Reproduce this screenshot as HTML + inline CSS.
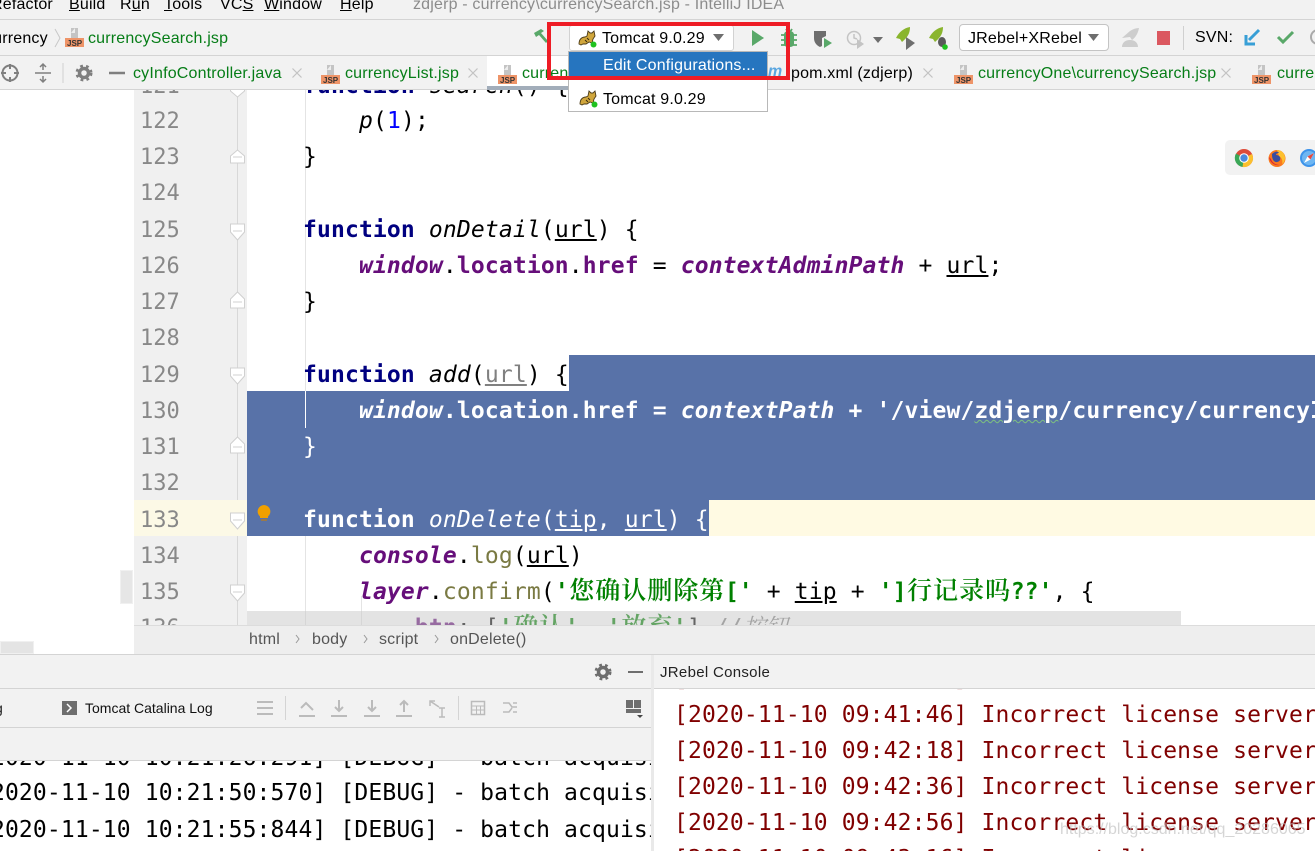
<!DOCTYPE html>
<html><head><meta charset="utf-8"><style>
html,body{margin:0;padding:0}
body{width:1315px;height:851px;overflow:hidden;position:relative;background:#fff;font-family:"Liberation Sans","Noto Sans CJK SC",sans-serif}
.a{position:absolute}
.t{position:absolute;white-space:pre;font-size:16px;letter-spacing:.18px;line-height:20px;color:#000}
.c{position:absolute;white-space:pre;font-family:"DejaVu Sans Mono","Noto Serif CJK SC",monospace;font-size:23px;letter-spacing:.14px;line-height:36px;color:#000;left:303px}
.n{position:absolute;left:140px;width:40px;font-family:"DejaVu Sans Mono",monospace;font-size:22px;line-height:36px;color:#888;white-space:pre}
.k{color:#000080;font-weight:bold}.w{color:#660e7a;font-weight:bold;font-style:italic}.i{font-style:italic}
.u{text-decoration:underline}.g{color:#008000;font-weight:bold}.sel,.sel *{color:#fff}
.cj{display:inline-block;width:26px;text-align:center;letter-spacing:0;font-family:"Noto Serif CJK SC",serif;font-size:25px;font-weight:600;color:#008000;line-height:30px}
.jsp{position:absolute;width:18px;height:20px}
.log{position:absolute;white-space:pre;font-family:"DejaVu Sans Mono",monospace;font-size:23px;letter-spacing:.13px;line-height:36px}
.r{color:#800000}
svg{position:absolute;overflow:visible}
</style></head><body>

<!-- editor -->
<div class="a" style="left:0;top:90px;width:134px;height:564px;background:#fff"></div>
<div class="a" style="left:120px;top:570px;width:13px;height:34px;background:#e6e6e6;border:1px solid #f0f0f0;box-sizing:border-box"></div>
<div class="a" style="left:134px;top:90px;width:113px;height:535px;background:#f0f0f0"></div>
<div class="a" style="left:237px;top:90px;width:1px;height:535px;background:#d8d8d8"></div>
<div class="a" style="left:134px;top:500px;width:113px;height:36px;background:#fcf9e6"></div>
<div class="a" style="left:247px;top:500px;width:1068px;height:36px;background:#fffae3"></div>
<div class="a" style="left:569px;top:355px;width:746px;height:36px;background:#5872a8"></div>
<div class="a" style="left:247px;top:391px;width:1068px;height:109px;background:#5872a8"></div>
<div class="a" style="left:247px;top:500px;width:462px;height:36px;background:#5872a8"></div>
<div class="a" style="left:305px;top:90px;width:1px;height:535px;background:#e4e4e4"></div>
<div class="a" style="left:305px;top:391px;width:1px;height:37px;background:#fff"></div>
<div class="a" style="left:305px;top:428px;width:1px;height:108px;background:#5872a8"></div>
<div class="a" style="left:361px;top:596px;width:1px;height:29px;background:#e4e4e4"></div>

<div class="n" style="top:69px">121</div><div class="n" style="top:104px">122</div><div class="n" style="top:140px">123</div><div class="n" style="top:176px">124</div><div class="n" style="top:213px">125</div><div class="n" style="top:249px">126</div><div class="n" style="top:285px">127</div><div class="n" style="top:321px">128</div><div class="n" style="top:358px">129</div><div class="n" style="top:394px">130</div><div class="n" style="top:430px">131</div><div class="n" style="top:466px">132</div><div class="n" style="top:503px">133</div><div class="n" style="top:539px">134</div><div class="n" style="top:575px">135</div><div class="n" style="top:611px">136</div>

<!-- fold marks -->
<svg style="left:0;top:0" width="1" height="1" fill="#fff" stroke="#d0d0d0" stroke-width="1">
<path d="M230.500 85h14v6l-7 6-7-6z"/>
<path d="M230.500 163v-7l7-6 7 6v7zM233 157h9"/>
<path d="M230.500 224h14v8l-7 8-7-8zM233 231h9"/>
<path d="M230.500 308v-9l7-7 7 7v9zM233 302h9"/>
<path d="M230.500 368h14v8l-7 8-7-8zM233 375h9"/>
<path d="M230.500 453v-9l7-7 7 7v9zM233 447h9"/>
<path d="M230.500 513h14v8l-7 8-7-8zM233 520h9"/>
<path d="M230.500 585h14v8l-7 8-7-8zM233 592h9"/>
</svg>
<svg style="left:0;top:0" width="1" height="1">
<path d="M264 505a6.500 6.500 0 0 1 4 11.500v1.500h-8v-1.500a6.500 6.500 0 0 1 4-11.500z" fill="#f0a000"/><rect x="261" y="519" width="6" height="2" fill="#99794a"/>
</svg>

<div class="c" style="top:68px"><span class="k">function</span> <span class="i">search</span>() {</div>
<div class="c" style="top:103px">    <span class="i">p</span>(<span style="color:#00f">1</span>);</div>
<div class="c" style="top:139px">}</div>
<div class="c" style="top:212px"><span class="k">function</span> <span class="i">onDetail</span>(<span class="u">url</span>) {</div>
<div class="c" style="top:248px">    <span class="w">window</span>.<b style="color:#660e7a">location</b>.<b style="color:#660e7a">href</b> = <span class="w">contextAdminPath</span> + <span class="u">url</span>;</div>
<div class="c" style="top:284px">}</div>
<div class="c" style="top:357px"><span class="k">function</span> <span class="i">add</span>(<span class="u" style="color:#808080">url</span>) {</div>
<div class="c sel" style="top:393px;font-weight:bold">    <span class="i">window</span>.location.href = <span class="i">contextPath</span> + '/view/<span style="text-decoration:underline wavy #7ec27e;text-decoration-thickness:1px">zdjerp</span>/currency/currencyInfo</div>
<div class="c sel" style="top:429px">}</div>
<div class="c sel" style="top:502px"><b>function</b> <span class="i">onDelete</span>(<span class="u">tip</span>, <span class="u">url</span>) {</div>
<div class="c" style="top:538px">    <span class="w">console</span>.<span style="color:#7a7a43">log</span>(<span class="u">url</span>)</div>
<div class="c" style="top:574px">    <span class="w">layer</span>.<span style="color:#7a7a43">confirm</span>(<span class="g">'<span class="cj">您</span><span class="cj">确</span><span class="cj">认</span><span class="cj">删</span><span class="cj">除</span><span class="cj">第</span>['</span> + <span class="u">tip</span> + <span class="g">']<span class="cj">行</span><span class="cj">记</span><span class="cj">录</span><span class="cj">吗</span>??'</span>, {</div>
<div class="c" style="top:610px">        <span class="k" style="color:#660e7a">btn</span>: [<span class="g">'<span class="cj">确</span><span class="cj">认</span>'</span>, <span class="g">'<span class="cj">放</span><span class="cj">弃</span>'</span>] <span class="i" style="color:#808080">//按钮</span></div>

<div class="a" style="left:247px;top:611px;width:934px;height:14px;background:rgba(200,200,200,.5)"></div>

<!-- chrome float -->
<div class="a" style="left:1225px;top:140px;width:95px;height:35px;background:#f2f2f2;border-radius:5px"></div>
<svg style="left:1235px;top:149px" width="18" height="18" viewBox="0 0 18 18"><circle cx="9" cy="9" r="9" fill="#dd4b39"/><path d="M9 9L1 4.500A9 9 0 0 0 8 18z" fill="#3aa757"/><path d="M9 9l8-4A9 9 0 0 1 7.500 18z" fill="#fbc02d"/><circle cx="9" cy="9" r="4.800" fill="#fff"/><circle cx="9" cy="9" r="3.700" fill="#4a89dc"/></svg>
<svg style="left:1268px;top:149px" width="18" height="18" viewBox="0 0 18 18"><circle cx="9" cy="9.500" r="8.500" fill="#f9791e"/><path d="M9 1a8 8 0 0 1 8 8c0 2-1 5-3 6 1-3 0-6-3-8z" fill="#fdc12f"/><path d="M4 5c3-3 6-3 7-1-2 0-3 1-3 2 3 0 5 2 4 5-1 2-4 3-6 1-2-2-2-5-2-7z" fill="#3a4ea0"/><path d="M1 8c1 6 6 9 11 8-4 0-8-2-9-6z" fill="#d6203c"/></svg>
<svg style="left:1300px;top:149px" width="18" height="18" viewBox="0 0 18 18"><circle cx="9" cy="9" r="9" fill="#3d93ea"/><circle cx="9" cy="9" r="7" fill="#6eb6f2"/><path d="M14 4L7.500 7.500 4 14l6.500-3.500z" fill="#fff"/><path d="M14 4L7.500 7.500l3 3z" fill="#e5483f"/></svg>

<!-- top menu -->
<div class="a" style="left:0;top:0;width:1315px;height:90px;background:#f2f2f2"></div>
<div class="t" style="left:-9px;top:-5px">Refactor</div>
<div class="t" style="left:69px;top:-5px"><u>B</u>uild</div>
<div class="t" style="left:120px;top:-5px">R<u>u</u>n</div>
<div class="t" style="left:164px;top:-5px"><u>T</u>ools</div>
<div class="t" style="left:220px;top:-5px">VC<u>S</u></div>
<div class="t" style="left:264px;top:-5px"><u>W</u>indow</div>
<div class="t" style="left:340px;top:-5px"><u>H</u>elp</div>
<div class="t" style="left:413px;top:-5px;color:#8c8c8c">zdjerp - currency\currencySearch.jsp - IntelliJ IDEA</div>
<div class="a" style="left:0;top:19px;width:1315px;height:1px;background:#d4d4d4"></div>
<div class="a" style="left:0;top:55px;width:1315px;height:1px;background:#d4d4d4"></div>
<div class="a" style="left:0;top:89px;width:1315px;height:1px;background:#d4d4d4"></div>

<!-- breadcrumb -->
<div class="t" style="left:-15px;top:29px">currency</div>
<svg style="left:54px;top:28px" width="8" height="20"><path d="M1 1l5 9-5 9" fill="none" stroke="#c8c8c8"/></svg>
<div class="jsp" style="left:65px;top:28px"><svg width="19" height="20"><path d="M6 0h7v10H6z" fill="#c4c4c4"/><path d="M6 5l4-5v5z" fill="#eee"/><rect x="0" y="10" width="19" height="9" fill="#ee9468"/><text x="2" y="18" font-size="8" font-family="Liberation Sans" fill="#333" font-weight="bold">JSP</text></svg></div>
<div class="t" style="left:88px;top:29px;color:#067d17">currencySearch.jsp</div>

<!-- tabs row left -->
<svg style="left:0;top:61px" width="130" height="24" fill="none" stroke="#7f7f7f" stroke-width="2">
<circle cx="10" cy="12" r="7.500"/><path d="M10 3v5M10 16v5M1 12h5M14 12h5"/>
<path d="M35 12h16" stroke-width="1.500"/><path d="M43 9V4m-3 2l3-3 3 3M43 15v5m-3-2l3 3 3-3" stroke-width="1.500"/>
<path d="M63 2v20" stroke="#d0d0d0" stroke-width="1"/>
<circle cx="84" cy="12" r="4.500" stroke-width="3.500"/><circle cx="84" cy="12" r="7" stroke-width="3" stroke-dasharray="2.700 3.100"/>
<path d="M109 12h16" stroke-width="2.500"/>
</svg>
<div class="t" style="left:133px;top:64px;color:#067d17">cyInfoController.java</div>
<div class="jsp" style="left:321px;top:65px"><svg width="19" height="20"><path d="M6 0h7v10H6z" fill="#c4c4c4"/><path d="M6 5l4-5v5z" fill="#eee"/><rect x="0" y="10" width="19" height="9" fill="#ee9468"/><text x="2" y="18" font-size="8" font-family="Liberation Sans" fill="#333" font-weight="bold">JSP</text></svg></div>
<div class="t" style="left:345px;top:64px;color:#067d17">currencyList.jsp</div>

<!-- active tab -->
<div class="a" style="left:487px;top:56px;width:82px;height:34px;background:#fff"></div>
<div class="a" style="left:487px;top:86px;width:82px;height:4px;background:#a2adba"></div>
<div class="jsp" style="left:498px;top:65px"><svg width="19" height="20"><path d="M6 0h7v10H6z" fill="#c4c4c4"/><path d="M6 5l4-5v5z" fill="#eee"/><rect x="0" y="10" width="19" height="9" fill="#ee9468"/><text x="2" y="18" font-size="8" font-family="Liberation Sans" fill="#333" font-weight="bold">JSP</text></svg></div>
<div class="t" style="left:522px;top:64px;color:#067d17;width:46px;overflow:hidden">currencySearch</div>

<!-- right tabs -->
<div class="t" style="left:768px;top:62px;color:#5aa6e0;font-weight:bold;font-style:italic">m</div>
<div class="t" style="left:791px;top:64px">pom.xml (zdjerp)</div>
<div class="jsp" style="left:954px;top:65px"><svg width="19" height="20"><path d="M6 0h7v10H6z" fill="#c4c4c4"/><path d="M6 5l4-5v5z" fill="#eee"/><rect x="0" y="10" width="19" height="9" fill="#ee9468"/><text x="2" y="18" font-size="8" font-family="Liberation Sans" fill="#333" font-weight="bold">JSP</text></svg></div>
<div class="t" style="left:978px;top:64px;color:#067d17">currencyOne\currencySearch.jsp</div>
<div class="jsp" style="left:1252px;top:65px"><svg width="19" height="20"><path d="M6 0h7v10H6z" fill="#c4c4c4"/><path d="M6 5l4-5v5z" fill="#eee"/><rect x="0" y="10" width="19" height="9" fill="#ee9468"/><text x="2" y="18" font-size="8" font-family="Liberation Sans" fill="#333" font-weight="bold">JSP</text></svg></div>
<div class="t" style="left:1277px;top:64px;color:#067d17">currency</div>

<!-- close crosses -->
<svg style="left:0;top:0" width="1" height="1" fill="none" stroke="#c2c2c2" stroke-width="1.200">
<path d="M292.500 68.500l9 9m0-9l-9 9M468.500 68.500l9 9m0-9l-9 9M923.500 68.500l9 9m0-9l-9 9M1221.500 68.500l9 9m0-9l-9 9"/>
<path d="M22.500 703.500l9 9m0-9l-9 9M225.500 703.500l9 9m0-9l-9 9"/>
</svg>

<!-- toolbar -->
<svg style="left:533px;top:28px" width="20" height="18"><path d="M1 5l7-4 3 2-3 2 7 8-2 2-7-8-3 2z" fill="#59a869"/></svg>
<div class="a" style="left:569px;top:25px;width:165px;height:26px;background:#fff;border:1px solid #d2d2d2;border-radius:3px;box-sizing:border-box"></div>
<svg style="left:578px;top:29px" width="20" height="20" viewBox="0 0 20 20"><path d="M1 15C1 10 4 8 7 8l2-1 1-5 2 2h2l2-2 1 5-2 3-1 4-3-1-3 2H5l-2 1z" fill="#d0a63c" stroke="#4a3a18" stroke-width=".9"/><path d="M9 9l2 2M7 11l2 2" stroke="#3a2c10" stroke-width="1"/><circle cx="15.500" cy="15.500" r="3" fill="#1fc21f"/></svg>
<div class="t" style="left:602px;top:29px">Tomcat 9.0.29</div>
<svg style="left:713px;top:34px" width="12" height="8"><path d="M0 0h11L5.500 7z" fill="#6e6e6e"/></svg>

<svg style="left:750px;top:30px" width="16" height="16"><path d="M2 0l12 8-12 8z" fill="#59a869"/></svg>
<svg style="left:780px;top:28px" width="18" height="20"><path d="M9 3c4 0 5 2 5 4v9c0 2-2 3-5 3s-5-1-5-3V7c0-2 1-4 5-4z" fill="#59a869"/><path d="M1 7h16M1 12h16M1 17h16M6 1l2 3m4-3l-2 3" stroke="#59a869" stroke-width="1.800"/><path d="M9 6v11" stroke="#f2f2f2" stroke-width="1"/></svg>
<svg style="left:813px;top:30px" width="20" height="20"><path d="M1 1h12v5l-4 2v8l-2 1C3 15 1 12 1 8z" fill="#6e6e6e"/><path d="M11 8l8 5-8 5z" fill="#59a869"/></svg>
<svg style="left:846px;top:30px" width="20" height="20" fill="none" stroke="#c4c4c4" stroke-width="1.500"><circle cx="8" cy="8" r="6.500"/><path d="M8 4v4l3 1"/><path d="M11 9l7 5-7 5z" fill="#c4c4c4" stroke="none"/></svg>
<svg style="left:873px;top:37px" width="10" height="6"><path d="M0 0h10L5 6z" fill="#6e6e6e"/></svg>
<svg style="left:895px;top:27px" width="22" height="24"><path d="M15 0c0 6-2 10-8 15l-2-3-4-1c3-6 8-10 14-11z" fill="#8ab52e"/><path d="M11 10l9 6-9 7z" fill="#6e6e6e"/></svg>
<svg style="left:928px;top:27px" width="22" height="24"><path d="M15 0c0 6-2 10-8 15l-2-3-4-1c3-6 8-10 14-11z" fill="#8ab52e"/><ellipse cx="14" cy="15" rx="4" ry="5" fill="#5a5a5a"/><circle cx="17" cy="20" r="2.800" fill="#1fc21f"/></svg>
<div class="a" style="left:959px;top:24px;width:150px;height:27px;background:#fff;border:1px solid #c4c4c4;border-radius:4px;box-sizing:border-box"></div>
<div class="t" style="left:968px;top:29px">JRebel+XRebel</div>
<svg style="left:1088px;top:34px" width="12" height="8"><path d="M0 0h11L5.500 7z" fill="#6e6e6e"/></svg>
<svg style="left:1120px;top:27px" width="22" height="22"><path d="M19 1c-1 5-3 9-7 12l-2-3-8 1 8-7c3-2 6-3 9-3zM2 20c0-4 3-7 8-7s8 3 8 7z" fill="#cdcdcd"/></svg>
<div class="a" style="left:1157px;top:31px;width:13px;height:14px;background:#db5860"></div>
<div class="a" style="left:1183px;top:26px;width:1px;height:24px;background:#d0d0d0"></div>
<div class="t" style="left:1195px;top:28px">SVN:</div>
<svg style="left:1245px;top:29px" width="16" height="17"><path d="M14 1L4 11" stroke="#389fd6" stroke-width="3"/><path d="M1 6v9h9" fill="none" stroke="#389fd6" stroke-width="3"/></svg>
<svg style="left:1277px;top:30px" width="17" height="14"><path d="M1 7l5 5 10-10" fill="none" stroke="#59a869" stroke-width="3"/></svg>
<svg style="left:1309px;top:29px" width="16" height="16"><circle cx="9" cy="8" r="7" fill="none" stroke="#aaa" stroke-width="2"/></svg>

<!-- dropdown -->
<div class="a" style="left:568px;top:51px;width:200px;height:61px;background:#fff;border:1px solid #b8b8b8;box-sizing:border-box"></div>
<div class="a" style="left:569px;top:52px;width:198px;height:26px;background:#2675bf"></div>
<div class="t" style="left:603px;top:56px;color:#fff">Edit Configurations...</div>
<svg style="left:579px;top:89px" width="20" height="20" viewBox="0 0 20 20"><path d="M1 15C1 10 4 8 7 8l2-1 1-5 2 2h2l2-2 1 5-2 3-1 4-3-1-3 2H5l-2 1z" fill="#d0a63c" stroke="#4a3a18" stroke-width=".9"/><path d="M9 9l2 2M7 11l2 2" stroke="#3a2c10" stroke-width="1"/><circle cx="15.500" cy="15.500" r="3" fill="#1fc21f"/></svg>
<div class="t" style="left:603px;top:90px">Tomcat 9.0.29</div>

<!-- red rect -->
<div class="a" style="left:547px;top:22px;width:243px;height:58px;border:4px solid #ee1c25;box-sizing:border-box"></div>

<!-- path bar -->
<div class="a" style="left:134px;top:625px;width:1181px;height:29px;background:#eeeeee;border-top:1px solid #dcdcdc;box-sizing:border-box"></div>
<div class="t" style="left:249px;top:630px;color:#555">html</div>
<div class="t" style="left:312px;top:630px;color:#555">body</div>
<div class="t" style="left:379px;top:630px;color:#555">script</div>
<div class="t" style="left:450px;top:630px;color:#555">onDelete()</div>
<svg style="left:0;top:0" width="1" height="1"><path d="M296 635l3 4-3 4M364 635l3 4-3 4M435 635l3 4-3 4" fill="none" stroke="#999"/></svg>
<div class="a" style="left:0;top:641px;width:34px;height:13px;background:#e4e4e4;border:1px solid #f0f0f0;box-sizing:border-box"></div>

<!-- bottom panels -->
<div class="a" style="left:0;top:654px;width:1315px;height:197px;background:#fff;border-top:1px solid #d4d4d4;box-sizing:border-box"></div>
<div class="a" style="left:0;top:655px;width:651px;height:105px;background:#f2f2f2"></div>
<div class="a" style="left:0;top:688px;width:651px;height:1px;background:#d4d4d4"></div>
<div class="a" style="left:0;top:727px;width:651px;height:1px;background:#d4d4d4"></div>
<div class="a" style="left:654px;top:655px;width:661px;height:33px;background:#f2f2f2"></div>
<div class="a" style="left:654px;top:688px;width:661px;height:1px;background:#d4d4d4"></div>
<div class="a" style="left:651px;top:655px;width:3px;height:196px;background:#e9e9e9"></div>
<div class="t" style="left:660px;top:663px;font-size:15px;letter-spacing:.3px;color:#222">JRebel Console</div>

<svg style="left:0;top:0" width="1" height="1" fill="none" stroke="#6e6e6e" stroke-width="2">
<circle cx="603" cy="672" r="4.500" stroke-width="3.500"/><circle cx="603" cy="672" r="7" stroke-width="3" stroke-dasharray="2.700 3.100"/>
<path d="M628 672h15" stroke-width="2"/>
</svg>
<div class="t" style="left:-5px;top:698px;font-size:14px;letter-spacing:0;color:#222">g</div>
<svg style="left:62px;top:701px" width="16" height="14"><rect width="15" height="14" fill="#6e6e6e"/><path d="M5 3l4 4-4 4" stroke="#fff" stroke-width="1.500" fill="none"/></svg>
<div class="t" style="left:85px;top:698px;font-size:14px;letter-spacing:0;color:#111">Tomcat Catalina Log</div>
<svg style="left:0;top:0" width="1" height="1" fill="none" stroke="#bbb" stroke-width="2">
<path d="M257 702h16M257 708h16M257 714h16"/>
<path d="M285.500 696v24M458.500 696v24" stroke="#d4d4d4" stroke-width="1"/>
<path d="M299 716h16M301 708l5-5 7 7" />
<path d="M331 716h16M339 700v11M335 707l4 4 4-4"/>
<path d="M364 716h16M372 700v11M368 707l4 4 4-4"/>
<path d="M396 716h16M404 712v-11M400 705l4-4 4 4"/>
<path d="M430 701l9 6M430 706v-5h5M442 708v9M439 708h6M439 717h6" stroke-width="1.500"/>
<rect x="471.500" y="701.500" width="13" height="13" stroke-width="1.500"/><path d="M472 706h12M472 710h12M476.500 706v8M480.500 706v8" stroke-width="1"/>
<path d="M503 703h6l3 4h5M503 712h6l3-4M513 712h4M513 703h4" stroke-width="1.500"/>
</svg>
<svg style="left:626px;top:700px" width="18" height="18"><rect width="7" height="8" fill="#6e6e6e"/><rect x="8" width="7" height="8" fill="#6e6e6e"/><rect y="9" width="15" height="4" fill="#6e6e6e"/><path d="M11 15h6l-3 3z" fill="#444"/></svg>

<!-- left console -->
<div class="a" style="left:0;top:760px;width:651px;height:91px;overflow:hidden">
<div class="log" style="left:-23px;top:-20px">[2020-11-10 10:21:26:291] [DEBUG] - batch acquisition</div>
<div class="log" style="left:-23px;top:15px">[2020-11-10 10:21:50:570] [DEBUG] - batch acquisition</div>
<div class="log" style="left:-23px;top:52px">[2020-11-10 10:21:55:844] [DEBUG] - batch acquisition</div>
</div>
<div class="a" style="left:0;top:760px;width:651px;height:1px;background:#d4d4d4"></div>

<!-- right console -->
<div class="a" style="left:654px;top:689px;width:661px;height:162px;overflow:hidden">
<div class="log r" style="left:20px;top:-28px">[2020-11-10 09:41:30] Incorrect license server</div>
<div class="log r" style="left:20px;top:8px">[2020-11-10 09:41:46] Incorrect license server</div>
<div class="log r" style="left:20px;top:44px">[2020-11-10 09:42:18] Incorrect license server</div>
<div class="log r" style="left:20px;top:80px">[2020-11-10 09:42:36] Incorrect license server</div>
<div class="log r" style="left:20px;top:116px">[2020-11-10 09:42:56] Incorrect license server</div>
<div class="log r" style="left:20px;top:152px">[2020-11-10 09:43:16] Incorrect license server</div>
</div>
<div class="t" style="left:1060px;top:820px;font-size:16px;letter-spacing:0;color:rgba(190,190,190,.65)">https://blog.csdn.net/qq_20286065</div>

</body></html>
